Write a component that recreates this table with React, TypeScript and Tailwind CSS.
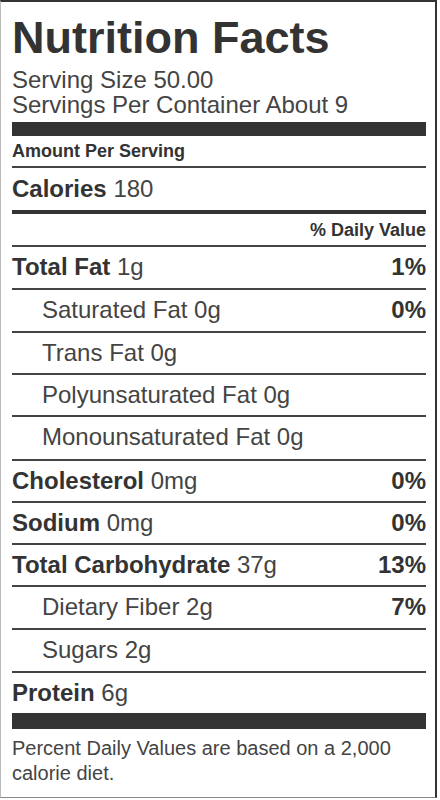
import React from 'react';

interface Nutrient {
  label: string;
  amount: string;
  dv?: string;
  bold?: boolean;
  indent?: boolean;
  h: string;
}

const nutrients: Nutrient[] = [
  { label: 'Total Fat', amount: '1g', dv: '1%', bold: true, h: 'h-[43px]' },
  { label: 'Saturated Fat', amount: '0g', dv: '0%', indent: true, h: 'h-[43px]' },
  { label: 'Trans Fat', amount: '0g', indent: true, h: 'h-[42px]' },
  { label: 'Polyunsaturated Fat', amount: '0g', indent: true, h: 'h-[42px]' },
  { label: 'Monounsaturated Fat', amount: '0g', indent: true, h: 'h-[44px]' },
  { label: 'Cholesterol', amount: '0mg', dv: '0%', bold: true, h: 'h-[42px]' },
  { label: 'Sodium', amount: '0mg', dv: '0%', bold: true, h: 'h-[42px]' },
  { label: 'Total Carbohydrate', amount: '37g', dv: '13%', bold: true, h: 'h-[42px]' },
  { label: 'Dietary Fiber', amount: '2g', dv: '7%', indent: true, h: 'h-[43px]' },
  { label: 'Sugars', amount: '2g', indent: true, h: 'h-[43px]' },
];

const Row: React.FC<{ n: Nutrient }> = ({ n }) => (
  <div className={`flex justify-between border-b-2 border-[#444] text-[24px] leading-[40px] ${n.h}`}>
    <span className={n.indent ? 'pl-[30px]' : ''}>
      {n.bold ? <b className="font-bold text-[#333]">{n.label}</b> : n.label} {n.amount}
    </span>
    {n.dv && <span className="font-bold text-[#333]">{n.dv}</span>}
  </div>
);

export default function App() {
  return (
    <div className="bg-white" style={{ fontFamily: '"Liberation Sans", Arial, sans-serif' }}>
      <div className="w-[437px] h-[798px] border-t-2 border-r-2 border-l border-b border-t-[#333] border-r-[#333] border-l-[#bbb] border-b-[#888] pl-[11px] pr-[9px] pt-[13px] text-[#444]">
        <h1 className="text-[45px] leading-none h-[45px] font-bold text-[#333]">Nutrition Facts</h1>
        <div className="mt-[7px] text-[24px] leading-[25px]">
          <div>Serving Size 50.00</div>
          <div>Servings Per Container About 9</div>
        </div>
        <div className="mt-[5px] h-[14px] bg-[#333]" />
        <div className="h-[32px] border-b-2 border-[#444] text-[18px] leading-[30px] font-bold text-[#333]">
          Amount Per Serving
        </div>
        <div className="h-[46px] border-b-4 border-[#333] text-[24px] leading-[42px]">
          <b className="font-bold text-[#333]">Calories</b> 180
        </div>
        <div className="h-[33px] border-b-2 border-[#444] text-right text-[18px] leading-[31px] pt-[1px] font-bold text-[#333]">
          % Daily Value
        </div>
        {nutrients.map((n) => (
          <Row key={n.label} n={n} />
        ))}
        <div className="h-[40px] text-[24px] leading-[40px]">
          <b className="font-bold text-[#333]">Protein</b> 6g
        </div>
        <div className="h-[16px] bg-[#333]" />
        <p className="mt-[7px] text-[20px] leading-[25px]">
          Percent Daily Values are based on a 2,000 calorie diet.
        </p>
      </div>
    </div>
  );
}
